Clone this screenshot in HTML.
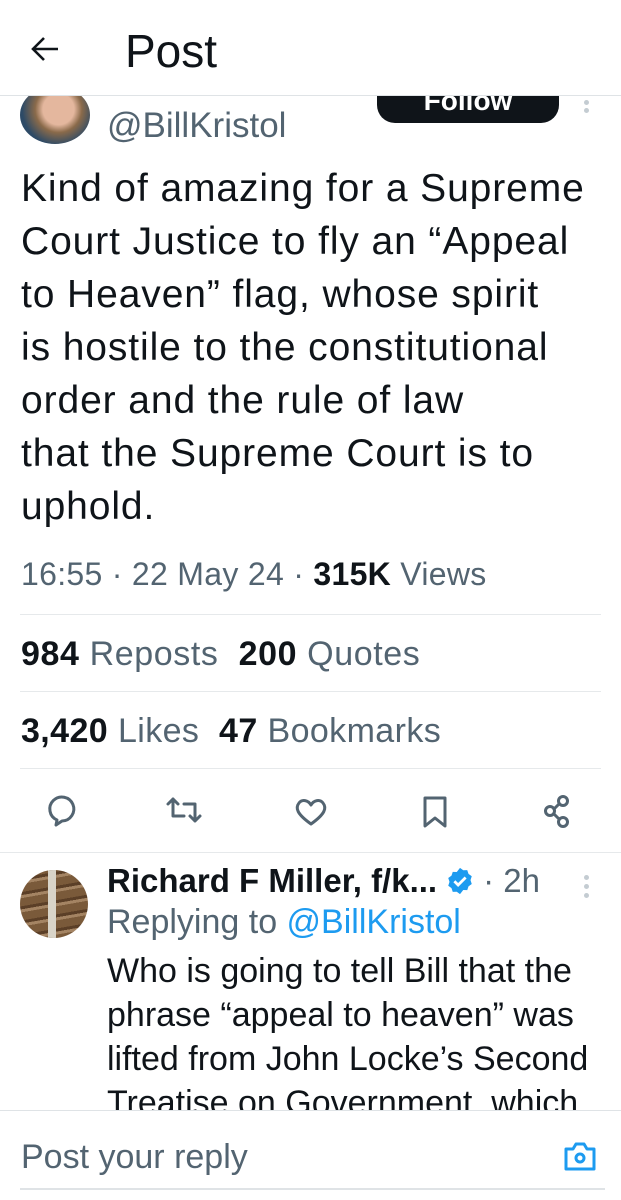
<!DOCTYPE html><html><head><style>
*{margin:0;padding:0;box-sizing:border-box}
body{width:621px;height:1200px;overflow:hidden;background:#fff;font-family:"Liberation Sans",sans-serif;color:#0f1419;position:relative}
.a{position:absolute;white-space:nowrap}
.g{color:#536471}
.hr{position:absolute;left:20px;right:20px;height:1px;background:#e6e9eb}
</style></head><body>
<div class="a" style="left:20px;top:86px;width:70px;height:58px;border-radius:50%;background:radial-gradient(circle at 55% 40%,#e4b79e 0 30%,#8a6a4a 45%,#2d4a66 70%);overflow:hidden"></div>
<div class="a g" style="left:107px;top:106px;font-size:35px">@BillKristol</div>
<div class="a" style="left:377px;top:86px;width:182px;height:37px;background:#0f1419;border-radius:0 0 18px 18px;color:#fff;font-weight:bold;font-size:28px;text-align:center;line-height:30px">Follow</div>
<div class="a" style="left:584px;top:100px;width:5px;height:5px;border-radius:50%;background:#c4ccd2"></div>
<div class="a" style="left:584px;top:108px;width:5px;height:5px;border-radius:50%;background:#c4ccd2"></div>
<div class="a" style="left:0;top:0;width:621px;height:96px;background:#fff;border-bottom:1px solid #dfe3e6"></div>
<svg class="a" style="left:30px;top:35px" width="30" height="28" viewBox="0 0 30 28"><path d="M28 14H4M14 3L3 14l11 11" fill="none" stroke="#0f1419" stroke-width="2.6"/></svg>
<div class="a" style="left:125px;top:24px;font-size:46px">Post</div>
<div class="a" style="left:21px;top:162px;font-size:39px;letter-spacing:0.9px;line-height:53px">Kind of amazing for a Supreme<br>Court Justice to fly an “Appeal<br>to Heaven” flag, whose spirit<br>is hostile to the constitutional<br>order and the rule of law<br>that the Supreme Court is to<br>uphold.</div>
<div class="a g" style="left:21px;top:556px;font-size:32px;letter-spacing:0.3px">16:55 · 22 May 24 · <b style="color:#0f1419">315K</b> Views</div>
<div class="hr" style="top:614px"></div>
<div class="a g" style="left:21px;top:635px;font-size:34px;letter-spacing:0.6px"><b style="color:#0f1419">984</b> Reposts&nbsp; <b style="color:#0f1419">200</b> Quotes</div>
<div class="hr" style="top:691px"></div>
<div class="a g" style="left:21px;top:712px;font-size:34px;letter-spacing:0.4px"><b style="color:#0f1419">3,420</b> Likes&nbsp; <b style="color:#0f1419">47</b> Bookmarks</div>
<div class="hr" style="top:768px"></div>
<svg class="a" style="left:38px;top:790px" width="560" height="40" viewBox="0 0 560 40" fill="none" stroke="#536471" stroke-width="3" stroke-linejoin="round" stroke-linecap="round">
<path d="M18 35l1-5a12 12 0 1 1 5 1z"/>
<path d="M130 14l5-5 5 5M135 9v17h11M162 26l-5 5-5-5M157 31V14h-11"/>
<path d="M273 34c-14-10-16-16-12-21 3-4 9-3 12 2 3-5 9-6 12-2 4 5 2 11-12 21z"/>
<path d="M387 8h20v28l-10-8-10 8z"/>
<circle cx="525" cy="11" r="4.5"/><circle cx="512" cy="21" r="4.5"/><circle cx="525" cy="32" r="4.5"/><path d="M516 19l5-5M516 24l5 5"/>
</svg>
<div class="hr" style="top:852px;left:0;right:0"></div>
<div class="a" style="left:20px;top:870px;width:68px;height:68px;border-radius:50%;background:repeating-linear-gradient(170deg,#7a5a3a 0 8px,#5b3f27 8px 11px,#a48463 11px 14px);overflow:hidden"><div style="position:absolute;left:28px;top:0;width:8px;height:68px;background:#d9d4c8"></div></div>
<div class="a" style="left:107px;top:862px;font-size:33px;display:flex;align-items:center"><b>Richard F Miller, f/k...</b><svg style="margin-left:8px" width="30" height="30" viewBox="0 0 24 24"><path d="M12 1.5l2.6 1.9 3.2-.1 1 3 2.6 1.9-1 3.1 1 3.1-2.6 1.9-1 3-3.2-.1L12 22.5l-2.6-1.9-3.2.1-1-3L2.6 15.8l1-3.1-1-3.1 2.6-1.9 1-3 3.2.1z" fill="#1d9bf0"/><path d="M7.5 12.2l3 3 6-6" fill="none" stroke="#fff" stroke-width="2.2"/></svg><span class="g" style="margin-left:8px">· 2h</span></div>
<div class="a" style="left:584px;top:875px;width:5px;height:5px;border-radius:50%;background:#c4ccd2"></div>
<div class="a" style="left:584px;top:884px;width:5px;height:5px;border-radius:50%;background:#c4ccd2"></div>
<div class="a" style="left:584px;top:893px;width:5px;height:5px;border-radius:50%;background:#c4ccd2"></div>
<div class="a g" style="left:107px;top:903px;font-size:34px">Replying to <span style="color:#1d9bf0">@BillKristol</span></div>
<div class="a" style="left:107px;top:949px;font-size:34px;line-height:44px">Who is going to tell Bill that the<br>phrase “appeal to heaven” was<br>lifted from John Locke’s Second<br>Treatise on Government, which</div>
<div class="a" style="left:0;top:1110px;width:621px;height:90px;background:#fff;border-top:1px solid #dfe3e6"></div>
<div class="a g" style="left:21px;top:1138px;font-size:34px">Post your reply</div>
<svg class="a" style="left:563px;top:1140px" width="34" height="32" viewBox="0 0 34 32" fill="none" stroke="#1d9bf0" stroke-width="3"><path d="M3 9h7l3-5h8l3 5h7v20H3z" stroke-linejoin="round"/><circle cx="17" cy="18" r="4"/></svg>
<div class="a" style="left:20px;top:1188px;width:585px;height:2px;background:#dfe3e6"></div>
</body></html>
